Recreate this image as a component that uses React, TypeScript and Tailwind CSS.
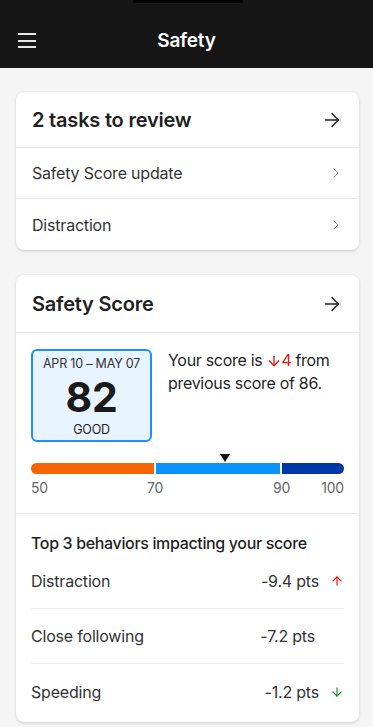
import { ArrowRight, ChevronRight, ArrowUp, ArrowDown } from 'lucide-react'

const BEHAVIORS: Array<{ label: string; value: string; trend: 'up' | 'down' | null }> = [
  { label: 'Distraction', value: '-9.4 pts', trend: 'up' },
  { label: 'Close following', value: '-7.2 pts', trend: null },
  { label: 'Speeding', value: '-1.2 pts', trend: 'down' },
]

function Card({ children, className = '' }: { children: React.ReactNode; className?: string }) {
  return (
    <div className={`ml-4 mr-[14px] bg-white rounded-lg shadow-[0_1px_3px_rgba(0,0,0,0.18)] overflow-hidden ${className}`}>
      {children}
    </div>
  )
}

export default function App() {
  return (
    <div className="min-h-[727px] bg-[#f5f5f5] text-[#222] tracking-[-0.2px]" style={{ fontFamily: 'Inter, "Noto Sans", sans-serif' }}>
      {/* Top bar */}
      <header className="relative h-[68px] bg-[#161616] flex items-center justify-center">
        <div className="absolute top-0 left-[133px] w-[110px] h-[3px] bg-black rounded-b-full" />
        <button className="absolute left-[18px] top-[33px] w-[18px] flex flex-col gap-[4.5px]">
          <span className="block h-[2px] w-full bg-[#e6e6e6]" />
          <span className="block h-[2px] w-full bg-[#e6e6e6]" />
          <span className="block h-[2px] w-full bg-[#e6e6e6]" />
        </button>
        <h1 className="mt-[14px] text-[19px] font-semibold text-white">Safety</h1>
      </header>

      {/* Tasks */}
      <Card className="mt-6">
        <div className="h-[56px] flex items-center justify-between pl-4 pr-[16px] border-b border-[#e6e6e6]">
          <span className="text-[20px] font-semibold text-[#1f1f1f]">2 tasks to review</span>
          <ArrowRight className="w-[22px] h-[22px] text-[#222]" strokeWidth={1.6} />
        </div>
        {['Safety Score update', 'Distraction'].map((t, i) => (
          <div key={t} className={`h-[51px] flex items-center justify-between pl-4 pr-[15px] ${i === 0 ? 'border-b border-[#e6e6e6]' : ''}`}>
            <span className="text-[16px] text-[#333]">{t}</span>
            <ChevronRight className="w-[16px] h-[16px] text-[#999]" strokeWidth={1.5} />
          </div>
        ))}
      </Card>

      {/* Safety Score */}
      <Card className="mt-[25px]">
        <div className="h-[58px] flex items-center justify-between pl-4 pr-[16px] border-b border-[#e6e6e6]">
          <span className="text-[20px] font-semibold text-[#1f1f1f]">Safety Score</span>
          <ArrowRight className="w-[22px] h-[22px] text-[#222]" strokeWidth={1.6} />
        </div>

        <div className="px-[15px] pt-[16px] pb-[16px] border-b border-[#e6e6e6]">
          <div className="flex items-start gap-[16px]">
            <div className="w-[121px] h-[93px] shrink-0 rounded-md border-2 border-[#1d8fff] bg-[#e8f4ff] flex flex-col items-center pt-[3px]">
              <span className="text-[12.5px] text-[#333] leading-[20px]">APR 10 – MAY 07</span>
              <span className="text-[41px] font-bold text-[#1a1a1a] leading-[46px]">82</span>
              <span className="text-[12.5px] text-[#222] leading-[18px] mt-[1px]">GOOD</span>
            </div>
            <div className="text-[16px] leading-[23px] text-[#1f1f1f] tracking-[-0.3px]">
              <div className="flex items-center gap-[4px]">
                <span>Your score is</span>
                <span className="text-[#e8150f] flex items-center">
                  <ArrowDown className="w-[16px] h-[16px] -mr-[1px]" strokeWidth={2} />
                  <span>4</span>
                </span>
                <span>from</span>
              </div>
              <div>previous score of 86.</div>
            </div>
          </div>

          <div className="relative mt-[21px]">
            <div className="absolute left-[189px] -top-[9px] w-0 h-0 border-l-[5px] border-r-[5px] border-t-[8px] border-l-transparent border-r-transparent border-t-[#111]" />
            <div className="flex h-[11px] mt-[11px] gap-[2px]">
              <div className="w-[123px] bg-[#f76400] rounded-l-full" />
              <div className="w-[124px] bg-[#0a93fd]" />
              <div className="flex-1 bg-[#0038a8] rounded-r-full" />
            </div>
            <div className="relative h-[20px] mt-[3px] text-[14px] text-[#666]">
              <span className="absolute left-0">50</span>
              <span className="absolute left-[116px]">70</span>
              <span className="absolute left-[242px]">90</span>
              <span className="absolute right-0">100</span>
            </div>
          </div>
        </div>

        <div className="px-[15px] pt-[18px] pb-[3px]">
          <h2 className="text-[16px] font-medium text-[#1f1f1f] leading-[22px] tracking-[-0.35px]">Top 3 behaviors impacting your score</h2>
          <div>
            {BEHAVIORS.map((b, i) => (
              <div
                key={b.label}
                className={`h-[55px] flex items-center ${i < BEHAVIORS.length - 1 ? 'border-b border-[#ececec]' : ''}`}
              >
                <span className="flex-1 text-[16px] text-[#333]">{b.label}</span>
                <span className={`text-[16px] text-[#333] ${b.trend ? '' : 'mr-[4px]'}`}>{b.value}</span>
                <span className="w-[25px] flex justify-end">
                  {b.trend === 'up' && <ArrowUp className="w-[14px] h-[14px] text-[#e8150f]" strokeWidth={2} />}
                  {b.trend === 'down' && <ArrowDown className="w-[14px] h-[14px] text-[#1e8a36]" strokeWidth={2} />}
                </span>
              </div>
            ))}
          </div>
        </div>
      </Card>
    </div>
  )
}
